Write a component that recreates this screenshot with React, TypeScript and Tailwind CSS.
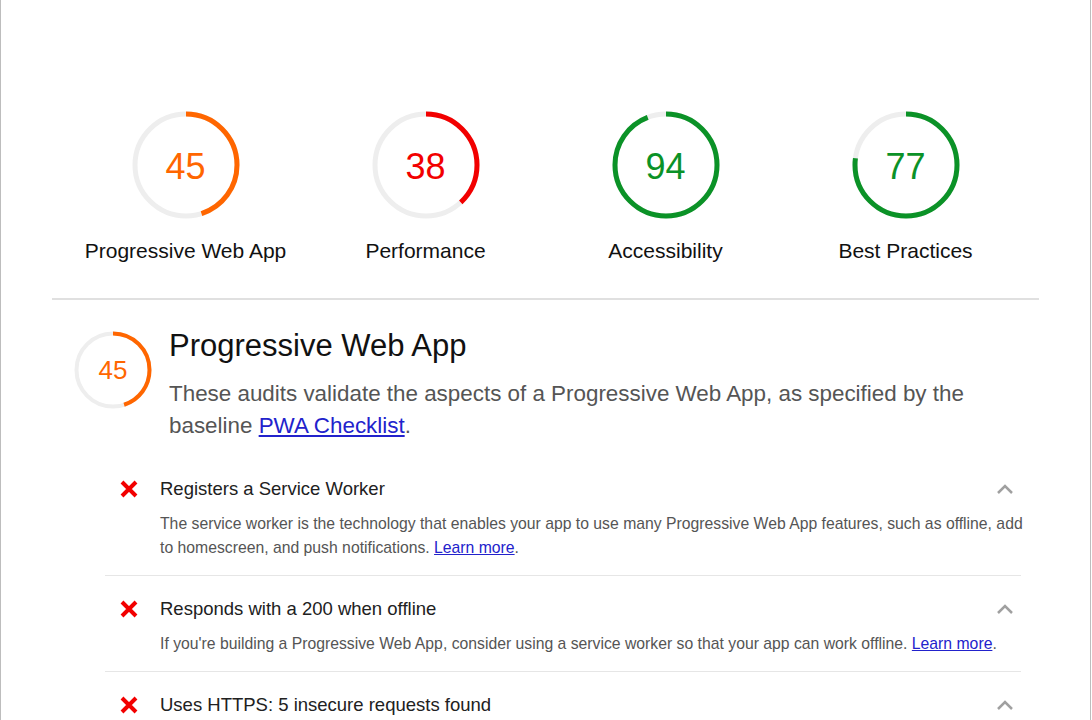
import React from "react";

const ORANGE = "#ff6600";
const RED = "#f20000";
const GREEN = "#0b9227";

function Gauge({ score, color, size, r, sw, fontCls }: { score: number; color: string; size: number; r: number; sw: number; fontCls: string }) {
  const c = 2 * Math.PI * r;
  const half = size / 2;
  return (
    <div className="relative flex items-center justify-center" style={{ width: size, height: size }}>
      <svg width={size} height={size} viewBox={`0 0 ${size} ${size}`} className="absolute inset-0">
        <circle cx={half} cy={half} r={r} fill="none" stroke="#eeeeee" strokeWidth={sw} />
        <circle
          cx={half}
          cy={half}
          r={r}
          fill="none"
          stroke={color}
          strokeWidth={sw}
          strokeDasharray={`${(c * score) / 100} ${c}`}
          transform={`rotate(-90 ${half} ${half})`}
        />
      </svg>
      <span className={`relative ${fontCls}`} style={{ color }}>
        {score}
      </span>
    </div>
  );
}

function XIcon() {
  return (
    <svg width="20" height="20" viewBox="0 0 20 20" className="shrink-0">
      <path d="M3 3 L17 17 M17 3 L3 17" stroke="#f20000" strokeWidth="4" strokeLinecap="butt" />
    </svg>
  );
}

function Chevron() {
  return (
    <svg width="18" height="12" viewBox="0 0 18 12">
      <path d="M2 10 L9 3 L16 10" fill="none" stroke="#a0a0a0" strokeWidth="2.5" />
    </svg>
  );
}

function Audit({ title, children, last }: { title: string; children: React.ReactNode; last?: boolean }) {
  return (
    <div className={`${last ? "" : "border-b border-[#e6e6e6]"} pt-[21px] pb-[15px]`}>
      <div className="flex items-center h-[24px]">
        <div className="w-[55px] pl-[14px] flex items-center">
          <XIcon />
        </div>
        <div className="flex-1 text-[18.5px] text-[#212121]">{title}</div>
        <div className="w-[40px] flex justify-center pl-[8px]">
          <Chevron />
        </div>
      </div>
      {children && (
        <div className="ml-[55px] w-[872px] mt-[11px] text-[15.75px] leading-[24px] text-[#555555]">{children}</div>
      )}
    </div>
  );
}

export default function App() {
  const gauges = [
    { score: 45, color: ORANGE, label: "Progressive Web App" },
    { score: 38, color: RED, label: "Performance" },
    { score: 94, color: GREEN, label: "Accessibility" },
    { score: 77, color: GREEN, label: "Best Practices" },
  ];
  return (
    <div
      className="w-[1091px] h-[720px] overflow-hidden bg-white border-x border-[#bdbdbd]"
      style={{ fontFamily: '"Liberation Sans", Arial, Helvetica, sans-serif' }}
    >
      <div className="flex justify-center pt-[109px]">
        {gauges.map((g) => (
          <div key={g.label} className="w-[240px] flex flex-col items-center">
            <Gauge score={g.score} color={g.color} size={112} r={51} sw={5} fontCls="text-[36px] leading-none pt-[3px]" />
            <div className="mt-[18px] text-[21px] leading-[24px] text-[#111111]">{g.label}</div>
          </div>
        ))}
      </div>
      <div className="mx-[51px] mt-[35px] h-[2px] bg-[#e0e0e0]" />
      <div className="flex pl-[72px] pt-[29px]">
        <div className="shrink-0 pt-[1px]">
          <Gauge score={45} color={ORANGE} size={80} r={36.5} sw={4} fontCls="text-[26px] leading-none" />
        </div>
        <div className="ml-[16px] pr-[60px]">
          <div className="text-[31px] leading-[40px] text-[#111111] -mt-[3px]">Progressive Web App</div>
          <div className="mt-[12px] text-[22.4px] leading-[32px] text-[#555555]">
            These audits validate the aspects of a Progressive Web App, as specified by the baseline{" "}
            <a className="text-[#2222cc] underline">PWA Checklist</a>.
          </div>
        </div>
      </div>
      <div className="ml-[104px] w-[916px] mt-[14px]">
        <Audit title="Registers a Service Worker">
          The service worker is the technology that enables your app to use many Progressive Web App features, such as offline, add to homescreen, and push notifications.{" "}
          <a className="text-[#2222cc] underline">Learn more</a>.
        </Audit>
        <Audit title="Responds with a 200 when offline">
          If you're building a Progressive Web App, consider using a service worker so that your app can work offline.{" "}
          <a className="text-[#2222cc] underline">Learn more</a>.
        </Audit>
        <Audit title="Uses HTTPS: 5 insecure requests found" last>
          All sites should be protected with HTTPS, even ones that don't handle sensitive data.
        </Audit>
      </div>
    </div>
  );
}
